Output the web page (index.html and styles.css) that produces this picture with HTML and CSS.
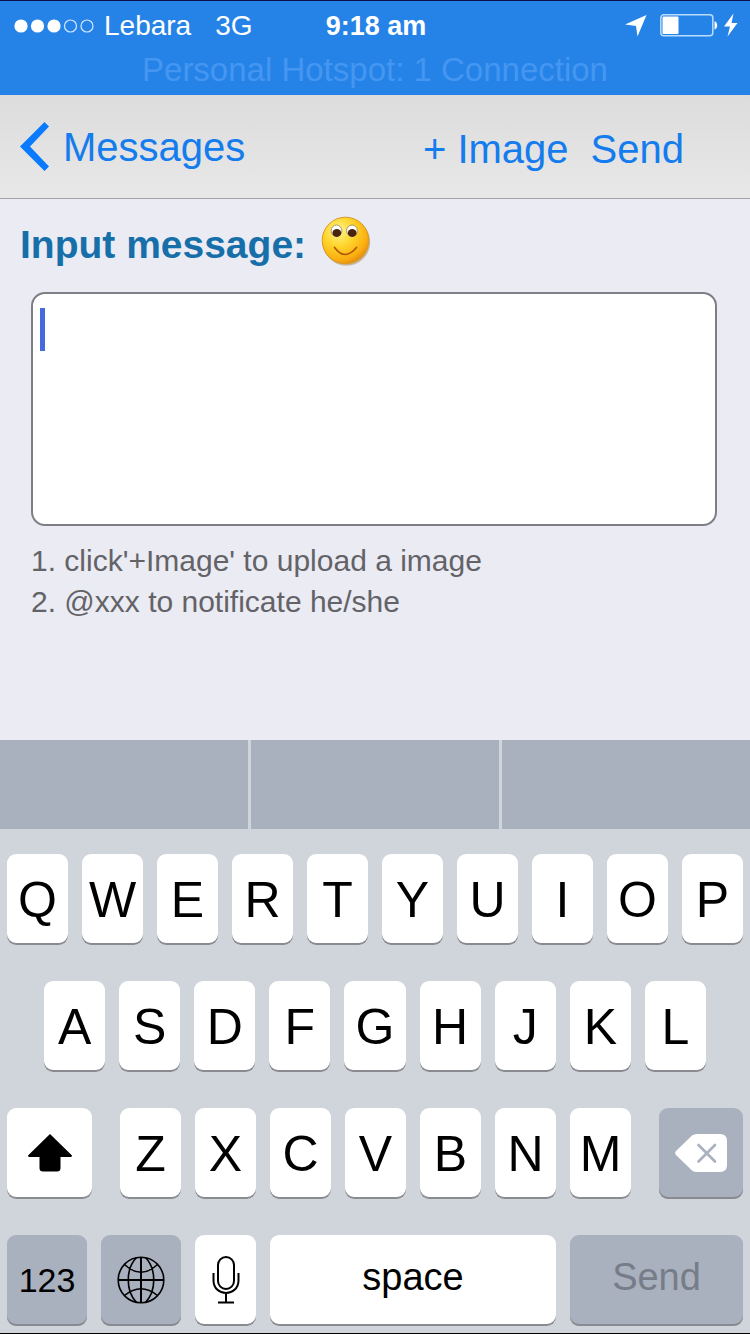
FILE: index.html
```
<!DOCTYPE html>
<html lang="en">
<head>
<meta charset="utf-8">
<meta name="viewport" content="width=device-width, initial-scale=1">
<title>Messages</title>
<link rel="stylesheet" href="styles.css">
</head>
<body>
<div class="screen">
  <header class="status">
    <div class="status-row">
      <div class="status-left">
        <svg class="signal" width="80" height="14" viewBox="0 0 80 14" aria-hidden="true">
          <g fill="#fff"><circle cx="7" cy="7" r="6.6"/><circle cx="23.500" cy="7" r="6.6"/><circle cx="40" cy="7" r="6.6"/></g>
          <g fill="none" stroke="#d5e9ff" stroke-width="1.200"><circle cx="56.500" cy="7" r="6"/><circle cx="73" cy="7" r="6"/></g>
        </svg>
        <span class="carrier">Lebara</span>
        <span>3G</span>
      </div>
      <time class="clock">9:18 am</time>
      <div class="status-right">
        <svg width="22" height="22" viewBox="0 0 22 22" aria-hidden="true"><path d="M21.500 0L0 9.500L11 11L12.500 21.500Z" fill="#fff"/></svg>
        <svg width="78" height="26" viewBox="0 0 78 26" aria-hidden="true">
          <rect x=".8" y="1.800" width="52" height="21" rx="3" fill="none" stroke="#b9dcff" stroke-width="1.500"/>
          <rect x="2.500" y="3.500" width="16" height="17.500" rx="1" fill="#fff"/>
          <path d="M54.500 8.200c3.600.6 3.600 7.600 0 8.200z" fill="#fff"/>
          <path d="M73.500 .5L64 13.500H70L67.500 23.500L77.500 10H71.500Z" fill="#fff"/>
        </svg>
      </div>
    </div>
    <p class="hotspot">Personal Hotspot: 1 Connection</p>
  </header>

  <nav class="navbar">
    <button class="nav-button back" type="button">
      <svg width="29" height="49" viewBox="0 0 29 49" aria-hidden="true"><path d="M24.500 0L29 4.500L10 24.500L29 44.500L24.500 49L0 24.500Z" fill="#0a7aff"/></svg>
      <span>Messages</span>
    </button>
    <div class="nav-actions">
      <button class="nav-button" type="button">+ Image</button>
      <button class="nav-button" type="button">Send</button>
    </div>
  </nav>

  <main class="composer">
    <div class="composer-head">
      <label class="composer-label" for="message">Input message:</label>
      <button class="emoji" type="button" aria-label="Insert emoji">
        <svg width="50" height="50" viewBox="0 0 50 50" aria-hidden="true">
          <defs>
            <radialGradient id="face" cx=".36" cy=".3" r=".72">
              <stop offset="0" stop-color="#fff58c"/><stop offset=".45" stop-color="#fed52c"/><stop offset=".85" stop-color="#fbae10"/><stop offset="1" stop-color="#e59212"/>
            </radialGradient>
          </defs>
          <circle cx="25.500" cy="26" r="23.700" fill="#a58a58" opacity=".55"/>
          <circle cx="24.500" cy="24.500" r="23.300" fill="url(#face)" stroke="#dc9822" stroke-width="1"/>
          <ellipse cx="15.500" cy="14.800" rx="5.400" ry="5.800" fill="#fff" stroke="#a8996e" stroke-width="1"/>
          <ellipse cx="31" cy="14.800" rx="5.400" ry="5.800" fill="#fff" stroke="#a8996e" stroke-width="1"/>
          <ellipse cx="15.800" cy="17" rx="4.400" ry="3.900" fill="#4b2410"/>
          <ellipse cx="31.200" cy="17" rx="4.400" ry="3.900" fill="#4b2410"/>
          <path d="M13.500 31.500Q24 45.500 35.500 31.500" fill="none" stroke="#b4560a" stroke-width="1.700" stroke-linecap="round"/>
        </svg>
      </button>
    </div>
    <div class="field">
      <textarea class="field-input" id="message"></textarea>
      <span class="caret"></span>
    </div>
    <div class="hints">
      <p>1. click'+Image' to upload a image</p>
      <p>2. @xxx to notificate he/she</p>
    </div>
  </main>

  <section class="keyboard" aria-label="Keyboard">
    <div class="suggestions"><span></span><span></span><span></span></div>
    <div class="keys">
      <div class="row row-top">
        <button class="key" type="button">Q</button><button class="key" type="button">W</button><button class="key" type="button">E</button><button class="key" type="button">R</button><button class="key" type="button">T</button><button class="key" type="button">Y</button><button class="key" type="button">U</button><button class="key" type="button">I</button><button class="key" type="button">O</button><button class="key" type="button">P</button>
      </div>
      <div class="row row-home">
        <button class="key" type="button">A</button><button class="key" type="button">S</button><button class="key" type="button">D</button><button class="key" type="button">F</button><button class="key" type="button">G</button><button class="key" type="button">H</button><button class="key" type="button">J</button><button class="key" type="button">K</button><button class="key" type="button">L</button>
      </div>
      <div class="row row-lower">
        <button class="key" type="button" aria-label="Shift">
          <svg width="44" height="38" viewBox="0 0 44 38" aria-hidden="true"><path d="M22 0L44 21.500Q44 23 42.500 23H32.500V34Q32.500 37.500 29 37.500H15Q11.500 37.500 11.500 34V23H1.500Q0 23 0 21.500Z"/></svg>
        </button>
        <div class="row row-letters">
          <button class="key" type="button">Z</button><button class="key" type="button">X</button><button class="key" type="button">C</button><button class="key" type="button">V</button><button class="key" type="button">B</button><button class="key" type="button">N</button><button class="key" type="button">M</button>
        </div>
        <button class="key key-dark" type="button" aria-label="Delete">
          <svg width="52" height="38" viewBox="0 0 52 38" aria-hidden="true">
            <path d="M17 1.500Q19 0 22 0H45Q52 0 52 7V31Q52 38 45 38H22Q19 38 17 36.500L1 21Q-.6 19 1 17Z" fill="#fff"/>
            <path d="M23.500 11L40 27.500M40 11L23.500 27.500" stroke="#a9b0be" stroke-width="2.600" stroke-linecap="round"/>
          </svg>
        </button>
      </div>
      <div class="row row-bottom">
        <button class="key key-dark key-number" type="button">123</button>
        <button class="key key-dark" type="button" aria-label="Next keyboard">
          <svg width="48" height="48" viewBox="0 0 48 48" aria-hidden="true" fill="none" stroke="#000" stroke-width="1.600">
            <circle cx="24" cy="24" r="22.800"/>
            <path d="M24 1V47M1 24H47" stroke-width="2"/>
            <path d="M19.500 1.500C8.500 13 8.500 35 19.500 46.500M28.500 1.500C39.500 13 39.500 35 28.500 46.500M7.500 8.500Q24 24 40.500 8.500M7.500 39.500Q24 26 40.500 39.500"/>
          </svg>
        </button>
        <button class="key" type="button" aria-label="Dictate">
          <svg width="28" height="48" viewBox="0 0 28 48" aria-hidden="true" fill="none" stroke="#000" stroke-width="2">
            <rect x="6" y="1" width="16" height="32" rx="8"/>
            <path d="M1.500 17V24.500C1.500 41 26.500 41 26.500 24.500V17M14 37V46.500M6 46.500H22"/>
          </svg>
        </button>
        <button class="key key-word" type="button">space</button>
        <button class="key key-dark key-word key-muted" type="button">Send</button>
      </div>
    </div>
  </section>
</div>
</body>
</html>
```
FILE: styles.css
```
* { box-sizing: border-box; }

body {
  margin: 0;
  font-family: "Liberation Sans", Arial, sans-serif;
  background: #ebebf4;
}

p { margin: 0; }
svg { display: block; flex: none; }

button {
  margin: 0;
  padding: 0;
  border: 0;
  background: none;
  font: inherit;
  color: inherit;
}

.screen {
  display: flex;
  flex-direction: column;
  min-height: 100vh;
  border-top: 1px solid #0b0f4a;
  border-bottom: 1px solid #000;
}

/* Status bar */
.status {
  padding-bottom: 6px;
  background: #2583e8;
  color: #fff;
}

.status-row {
  display: grid;
  grid-template-columns: 1fr auto 1fr;
  align-items: center;
  padding: 0 12px 0 14px;
  font-size: 28px;
  line-height: 50px;
}

.status-left,
.status-right {
  display: flex;
  align-items: center;
}

.signal { margin-right: 10px; }
.carrier { margin-right: 24px; }

.status-right {
  justify-content: flex-end;
  gap: 13px;
}

.clock {
  font-size: 27px;
  font-weight: bold;
}

.hotspot {
  color: #4596f0;
  font-size: 33px;
  line-height: 38px;
  text-align: center;
}

/* Navigation bar */
.navbar {
  display: flex;
  align-items: center;
  justify-content: space-between;
  min-height: 104px;
  padding: 0 66px 0 20px;
  border-bottom: 1px solid #a3a3a9;
  background: linear-gradient(#dcdcdc, #e8e8e8);
}

.nav-button {
  color: #147ced;
  font-size: 40px;
  line-height: 48px;
}

.back {
  display: flex;
  align-items: center;
  gap: 14px;
}

.nav-actions {
  display: flex;
  gap: 22px;
  padding-top: 4px;
}

/* Composer */
.composer {
  flex: 1;
  padding: 24px 33px 0 31px;
}

.composer-head {
  display: flex;
  align-items: center;
  gap: 15px;
  height: 44px;
  margin-left: -11px;
}

.composer-label {
  color: #176fa9;
  font-size: 39px;
  font-weight: bold;
}

.emoji { padding-bottom: 8px; }

.field {
  position: relative;
  margin-top: 25px;
}

.field-input {
  display: block;
  width: 100%;
  height: 234px;
  padding: 12px;
  border: 2px solid #7e7e84;
  border-radius: 14px;
  background: #fff;
  font: inherit;
  font-size: 38px;
  resize: none;
}

.caret {
  position: absolute;
  top: 16px;
  left: 9px;
  width: 5px;
  height: 43px;
  background: #4669dd;
}

.hints {
  margin-top: 14px;
  color: #636367;
  font-size: 30px;
  line-height: 41px;
}

/* Keyboard */
.keyboard { background: #d0d4db; }

.suggestions {
  display: grid;
  grid-template-columns: repeat(3, 1fr);
  gap: 3px;
  height: 89px;
}

.suggestions span { background: #a9b0be; }

.keys {
  display: grid;
  gap: 36px;
  padding: 25px 7px 7px;
}

.row {
  display: grid;
  gap: 14px;
}

.row-top { grid-template-columns: repeat(10, 1fr); }
.row-home { grid-template-columns: repeat(9, 1fr); padding: 0 37px; }
.row-lower { grid-template-columns: 85fr 511fr 84fr; gap: 28px; }
.row-letters { grid-template-columns: repeat(7, 1fr); }
.row-bottom { grid-template-columns: 80fr 80fr 61fr 286fr 173fr; }

.key {
  display: flex;
  align-items: center;
  justify-content: center;
  min-width: 0;
  height: 91px;
  border-radius: 9px;
  background: #fff;
  box-shadow: inset 0 -2px #898b90;
  color: #000;
  font-size: 50px;
}

.key svg { margin-bottom: 2px; }

.key-dark { background: #a9b0be; }
.key-number { font-size: 34px; }
.key-word { font-size: 38px; padding-bottom: 6px; }
.key-muted { color: #767d88; }
```
